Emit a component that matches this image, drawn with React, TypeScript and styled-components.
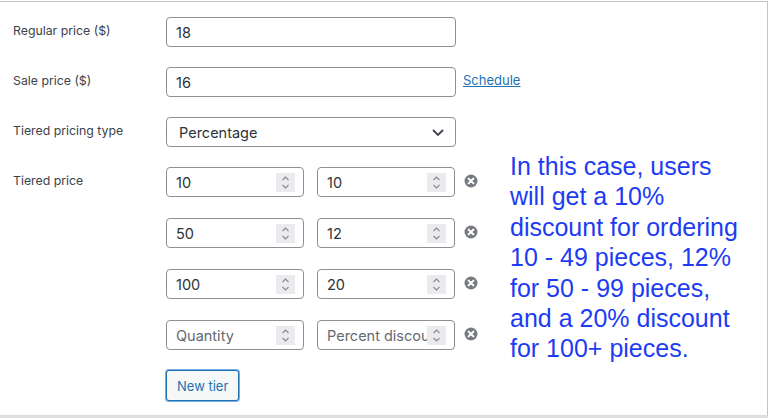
import React from 'react';
import styled, { createGlobalStyle } from 'styled-components';

const GlobalStyle = createGlobalStyle`
  html, body {
    margin: 0;
    padding: 0;
    background: #ffffff;
  }
  body {
    font-family: Inter, "Liberation Sans", sans-serif;
    color: #3c434a;
  }
`;

const tiers = [
  { qty: '10', value: '10' },
  { qty: '50', value: '12' },
  { qty: '100', value: '20' },
  { qty: '', value: '' },
];

function Spinner() {
  return (
    <SpinBox>
      <svg width="9" height="15" viewBox="0 0 9 15" fill="none">
        <path d="M1.5 5 L4.5 2 L7.5 5" stroke="#8a8a8e" strokeWidth="1.1" />
        <path d="M1.5 10 L4.5 13 L7.5 10" stroke="#8a8a8e" strokeWidth="1.1" />
      </svg>
    </SpinBox>
  );
}

function RemoveIcon() {
  return (
    <RemoveButton aria-label="Remove tier">
      <svg width="14" height="14" viewBox="0 0 14 14">
        <circle cx="7" cy="7" r="6.5" fill="#787c82" />
        <path d="M4.6 4.6 L9.4 9.4 M9.4 4.6 L4.6 9.4" stroke="#fff" strokeWidth="2" strokeLinecap="round" />
      </svg>
    </RemoveButton>
  );
}

export default function App() {
  return (
    <>
      <GlobalStyle />
      <Panel>
        <Row>
          <Label>Regular price ($)</Label>
          <TextInput defaultValue="18" />
        </Row>
        <Row>
          <Label>Sale price ($)</Label>
          <TextInput defaultValue="16" />
          <Link href="#">Schedule</Link>
        </Row>
        <Row>
          <Label>Tiered pricing type</Label>
          <Select>
            <span>Percentage</span>
            <svg width="14" height="10" viewBox="0 0 14 10" fill="none">
              <path d="M2 3 L7 8 L12 3" stroke="#3c434a" strokeWidth="1.8" />
            </svg>
          </Select>
        </Row>
        <Row>
          <Label>Tiered price</Label>
          <TierList>
            {tiers.map((t, i) => (
              <TierRow key={i}>
                <NumberField>
                  <NumberText $placeholder={!t.qty}>{t.qty || 'Quantity'}</NumberText>
                  <Spinner />
                </NumberField>
                <NumberField>
                  <NumberText $placeholder={!t.value}>{t.value || 'Percent discount'}</NumberText>
                  <Spinner />
                </NumberField>
                <RemoveIcon />
              </TierRow>
            ))}
            <NewTier>New tier</NewTier>
          </TierList>
          <Note>
            In this case, users<br />
            will get a 10%<br />
            discount for ordering<br />
            10 - 49 pieces, 12%<br />
            for 50 - 99 pieces,<br />
            and a 20% discount<br />
            for 100+ pieces.
          </Note>
        </Row>
      </Panel>
      <Footer />
    </>
  );
}

const Panel = styled.div`
  box-sizing: border-box;
  width: 768px;
  height: 415px;
  border-top: 1px solid #c3c4c7;
  border-right: 1px solid #c3c4c7;
  border-bottom: 1px solid #dcdcde;
  margin-top: 1px;
  padding: 15px 0 0 13px;
  display: flex;
  flex-direction: column;
  gap: 20px;
`;

const Footer = styled.div`
  height: 3px;
  background: #e0e0e1;
`;

const Row = styled.div`
  display: flex;
  align-items: flex-start;
`;

const Label = styled.div`
  width: 153px;
  flex-shrink: 0;
  padding-top: 6px;
  font-size: 12.3px;
  line-height: 16px;
  color: #3c434a;
`;

const TextInput = styled.input`
  box-sizing: border-box;
  width: 290px;
  height: 30px;
  border: 1px solid #8c8f94;
  border-radius: 4px;
  padding: 0 9px;
  font-family: Inter, "Liberation Sans", sans-serif;
  font-size: 14.5px;
  color: #2c3338;
  background: #fff;
  outline: none;
`;

const Link = styled.a`
  margin: 5px 0 0 7px;
  font-size: 13px;
  line-height: 16px;
  color: #2271b1;
  text-decoration: underline;
`;

const Select = styled.div`
  box-sizing: border-box;
  width: 290px;
  height: 30px;
  border: 1px solid #8c8f94;
  border-radius: 4px;
  padding: 0 10px 0 12px;
  display: flex;
  align-items: center;
  justify-content: space-between;
  font-size: 14.5px;
  color: #2c3338;
`;

const TierList = styled.div`
  display: flex;
  flex-direction: column;
  gap: 21px;
`;

const TierRow = styled.div`
  display: flex;
  align-items: center;
  gap: 13px;
`;

const NumberField = styled.div`
  position: relative;
  box-sizing: border-box;
  width: 138px;
  height: 30px;
  border: 1px solid #8c8f94;
  border-radius: 4px;
  padding: 0 8px 0 9px;
  display: flex;
  align-items: center;
  overflow: hidden;
`;

const NumberText = styled.span<{ $placeholder: boolean }>`
  flex: 1;
  min-width: 0;
  white-space: nowrap;
  overflow: hidden;
  font-size: 14.5px;
  color: ${(p) => (p.$placeholder ? '#646970' : '#2c3338')};
`;

const SpinBox = styled.div`
  flex-shrink: 0;
  width: 19px;
  height: 19px;
  background: #ebebef;
  display: flex;
  align-items: center;
  justify-content: center;
`;

const RemoveButton = styled.span`
  display: flex;
  margin-left: -4px;
  margin-top: -3px;
`;

const NewTier = styled.button`
  align-self: flex-start;
  box-sizing: border-box;
  height: 31px;
  margin-top: -1px;
  padding: 0 10px;
  border: 1px solid #2271b1;
  border-radius: 3px;
  background: #f6f7f7;
  color: #2271b1;
  font-family: Inter, "Liberation Sans", sans-serif;
  font-size: 13px;
  box-shadow: 0 0 0 1px #72aee6;
`;

const Note = styled.div`
  margin: -16px 0 0 32px;
  font-family: "Liberation Sans", Arial, sans-serif;
  font-size: 25px;
  line-height: 30.4px;
  color: #1d3cf2;
`;
